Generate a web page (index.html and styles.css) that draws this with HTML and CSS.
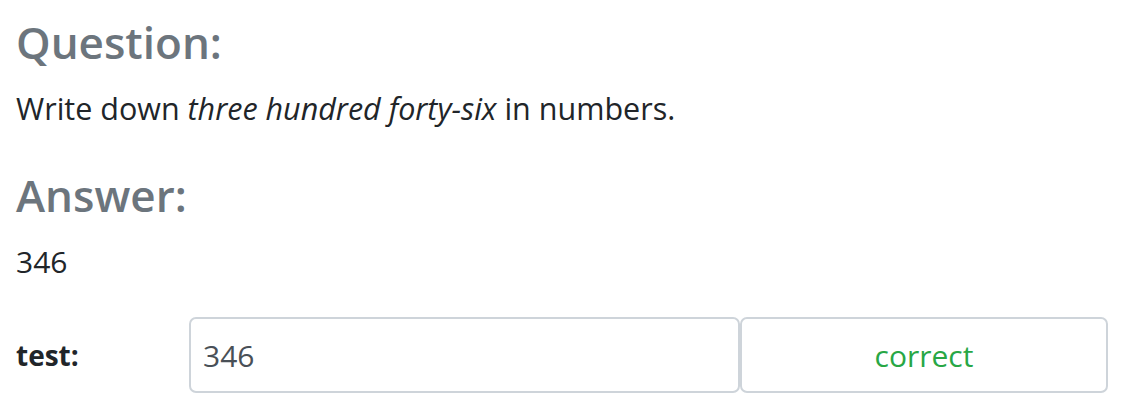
FILE: index.html
```html
<!DOCTYPE html>
<html>
<head>
    <title>Question</title>
    <link rel="stylesheet" href="styles.css">
</head>
<body>
    <div class="container">
        <h3 class="section-title">Question:</h3>
        <p class="question">Write down <em>three hundred forty-six</em> in numbers.</p>

        <h3 class="section-title">Answer:</h3>
        <p class="answer">346</p>

        <form class="test-row">
            <label for="testInput" class="test-label">test:</label>
            <input id="testInput" class="test-input" type="text" value="346">
            <div class="test-result">correct</div>
        </form>
    </div>
</body>
</html>
```

FILE: styles.css
```css
body {
    margin: 0;
    font-family: "Open Sans", "Noto Sans", sans-serif;
    font-size: 30px;
    color: #212529;
    background-color: #fff;
}

.container {
    padding: 0 19px 0 16px;
}

.section-title {
    margin: 0;
    padding-top: 16px;
    font-size: 44px;
    font-weight: 600;
    line-height: 1.2;
    color: #6c757d;
}

.question {
    margin: 17px 0 21px;
    line-height: 1.5;
    font-size: 30.5px;
}

.answer {
    margin: 18px 0 0;
    line-height: 1.5;
}

.test-row {
    display: grid;
    grid-template-columns: 173px 551px 1fr;
    align-items: center;
    margin-top: 33px;
}

.test-label {
    font-weight: 700;
    font-size: 28px;
}

.test-input,
.test-result {
    box-sizing: border-box;
    height: 76px;
    border: 2px solid #ced4da;
    border-radius: 7px;
    background-color: #fff;
    font-family: inherit;
    font-size: 30px;
}

.test-input {
    padding: 0 12px;
    color: #495057;
    width: 100%;
}

.test-result {
    display: flex;
    align-items: center;
    justify-content: center;
    color: #28a745;
}
```
